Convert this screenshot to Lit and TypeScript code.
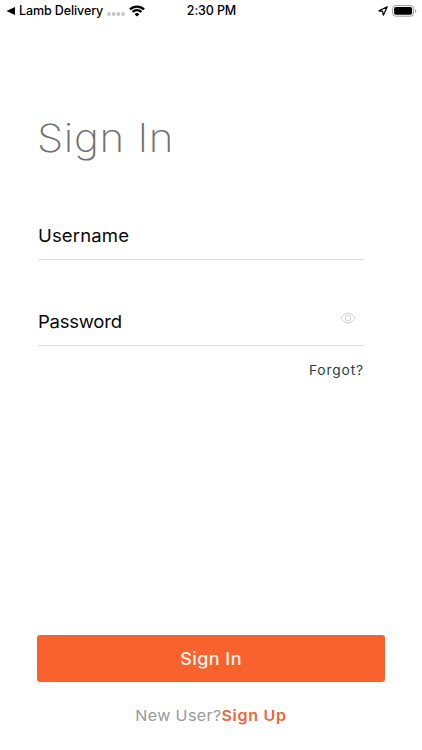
import { LitElement, html, css } from "lit";
import { customElement } from "lit/decorators.js";

@customElement("app-root")
export class AppRoot extends LitElement {
  static styles = css`
    :host { display: flex; flex-direction: column; box-sizing: border-box; width: 100%; height: 100vh; overflow: hidden; background: #fff; color: #080808; font-family: Inter, "Liberation Sans", sans-serif; }
    .status { display: grid; grid-template-columns: 1fr auto 1fr; height: 21px; align-items: center; padding: 0 5px 0 6px; font-size: 12.5px; font-weight: 500; line-height: 20px; color: #000; flex: none; white-space: nowrap; }
    .left, .right { display: flex; align-items: center; }
    .right { justify-content: flex-end; gap: 4px; }
    .caret { margin-right: 3px; }
    .back { letter-spacing: -0.1px; }
    .time { letter-spacing: -0.12px; }
    .dots { margin: 7px 4px 0 4px; }
    svg { display: block; flex: none; }
    form { display: flex; flex-direction: column; padding: 93px 58px 0 38px; }
    h1 { margin: 0; font-size: 39px; line-height: 48px; font-weight: 200; letter-spacing: 0.6px; color: #707070; transform: scaleX(1.08); transform-origin: left; margin-left: -1px; }
    .field { display: flex; justify-content: space-between; border-bottom: 1px solid #dedede; font-size: 17.5px; font-weight: 370; line-height: 24px; height: 35px; }
    .field span { transform: scaleX(1.06); transform-origin: left; }
    .user { letter-spacing: 0.12px; }
    .pass { letter-spacing: -0.25px; }
    .first { margin-top: 62px; }
    .second { margin-top: 50px; }
    .eye { margin: 2px 8px 0 0; }
    .forgot { align-self: flex-end; margin-top: 14px; font-size: 13px; line-height: 20px; letter-spacing: 0.8px; color: #263d48; transform: scaleX(1.06); transform-origin: right; }
    footer { margin-top: auto; padding: 0 37px 24px; display: flex; flex-direction: column; align-items: stretch; }
    button { border: 0; padding: 1px 0 0; height: 47px; border-radius: 3px; background: #f9622c; color: #fff5ee; font: 500 17px/46px Inter, sans-serif; letter-spacing: 0.4px; }
    button span { display: inline-block; transform: scaleX(1.06); }
    .join { display: flex; justify-content: center; margin-top: 24px; font-size: 15px; line-height: 20px; letter-spacing: 0.5px; color: #999; white-space: nowrap; transform: scaleX(1.07); }
    .join span { letter-spacing: 0.35px; }
    .join b { font-weight: 600; letter-spacing: 0.65px; color: #f2633a; }
  `;

  render() {
    return html`
      <div class="status">
        <div class="left">
          <svg class="caret" width="10" height="8" viewBox="0 0 10 8"><path d="M.5 4 9 0v8z" /></svg>
          <span class="back">Lamb Delivery</span>
          <svg class="dots" width="18" height="4" viewBox="0 0 18 4" fill="#c6c6c6"><circle cx="2" cy="2" r="1.9" /><circle cx="6.7" cy="2" r="1.9" /><circle cx="11.4" cy="2" r="1.9" /><circle cx="16" cy="2" r="1.9" /></svg>
          <svg width="16" height="12" viewBox="0 0 16 12" fill="none" stroke="#000" stroke-width="2.3"><path d="M1 4.4a10 10 0 0 1 14 0M3.5 7a6.4 6.4 0 0 1 9 0" /><path d="M8 11.6 5.6 9.2a3.4 3.4 0 0 1 4.8 0z" fill="#000" stroke="none" /></svg>
        </div>
        <span class="time">2:30 PM</span>
        <div class="right">
          <svg width="10" height="10" viewBox="0 0 10 10" fill="none" stroke="#000" stroke-width="1.2" stroke-linejoin="round"><path d="M9.2.9.9 4.8l3.7.6.7 3.8z" /></svg>
          <svg width="25" height="12" viewBox="0 0 25 12"><rect x=".6" y=".6" width="21" height="10.6" rx="3" fill="#fff" stroke="#999" /><rect x="2.1" y="2.1" width="18" height="7.6" rx="1.7" /><path d="M23 4v4q1.4-.6 1.4-2T23 4" fill="#aaa" /></svg>
        </div>
      </div>
      <form>
        <h1>Sign In</h1>
        <div class="field first"><span class="user">Username</span></div>
        <div class="field second">
          <span class="pass">Password</span>
          <svg class="eye" width="16" height="12" viewBox="0 0 16 12" fill="none" stroke="#ccc"><path d="M.7 6Q4 1 8 1t7.3 5Q12 11 8 11T.7 6Z" /><circle cx="8" cy="6" r="2.8" /></svg>
        </div>
        <span class="forgot">Forgot?</span>
      </form>
      <footer>
        <button type="button"><span>Sign In</span></button>
        <div class="join"><span>New User?</span><b>Sign Up</b></div>
      </footer>
    `;
  }
}
